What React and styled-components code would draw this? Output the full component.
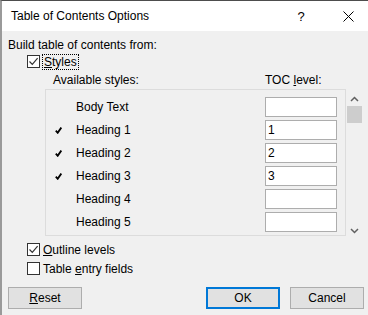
import React from "react";
import styled, { createGlobalStyle } from "styled-components";

const Global = createGlobalStyle`
html, body {
    margin: 0;
    padding: 0;
    background: #f0f0f0;
}
body {
    font-family: "Liberation Sans", Arial, sans-serif;
    font-size: 12px;
    color: #000;
}
`

const styles = [
    { name: "Body Text", level: "", used: false },
    { name: "Heading 1", level: "1", used: true },
    { name: "Heading 2", level: "2", used: true },
    { name: "Heading 3", level: "3", used: true },
    { name: "Heading 4", level: "", used: false },
    { name: "Heading 5", level: "", used: false },
]

function Tick() {
    return (
        <svg width="7" height="7" viewBox="0 0 7 7">
            <path d="M0.8 3.6 L2.7 5.8 L6.3 0.6" fill="none" stroke="#000" strokeWidth="1.8" />
        </svg>
    )
}

function Box({ checked }) {
    return (
        <CheckBox>
            {checked && (
                <svg width="11" height="11" viewBox="0 0 11 11">
                    <path d="M1.5 5.5 L4.3 8.3 L9.6 2.2" fill="none" stroke="#333" strokeWidth="1.2" />
                </svg>
            )}
        </CheckBox>
    )
}

export default function App() {
    return (
        <>
            <Global />
            <Window>
                <TitleBar>
                    <span>Table of Contents Options</span>
                    <Help>?</Help>
                    <Close>
                        <svg width="11" height="11" viewBox="0 0 11 11">
                            <path d="M0.5 0.5 L10.5 10.5 M10.5 0.5 L0.5 10.5" stroke="#000" strokeWidth="1" />
                        </svg>
                    </Close>
                </TitleBar>
                <Body>
                    <GroupLabel>Build table of contents from:</GroupLabel>
                    <CheckRow>
                        <Box checked />
                        <Focus><u>S</u>tyles</Focus>
                    </CheckRow>
                    <Headers>
                        <span>Available styles:</span>
                        <span>TOC <u>l</u>evel:</span>
                    </Headers>
                    <ListArea>
                        <ListBox>
                            {styles.map((s) => (
                                <StyleRow key={s.name}>
                                    <Mark>{s.used && <Tick />}</Mark>
                                    <StyleName>{s.name}</StyleName>
                                    <Level>{s.level}</Level>
                                </StyleRow>
                            ))}
                        </ListBox>
                        <ScrollBar>
                            <svg width="9" height="6" viewBox="0 0 9 6">
                                <path d="M1 5 L4.5 1.5 L8 5" fill="none" stroke="#606060" strokeWidth="1.5" />
                            </svg>
                            <Thumb />
                            <Spacer />
                            <svg width="9" height="6" viewBox="0 0 9 6">
                                <path d="M1 1 L4.5 4.5 L8 1" fill="none" stroke="#606060" strokeWidth="1.5" />
                            </svg>
                        </ScrollBar>
                    </ListArea>
                    <CheckRow top={6}>
                        <Box checked />
                        <Label><u>O</u>utline levels</Label>
                    </CheckRow>
                    <CheckRow top={4}>
                        <Box />
                        <Label>Table <u>e</u>ntry fields</Label>
                    </CheckRow>
                    <Buttons>
                        <Button><u>R</u>eset</Button>
                        <Right>
                            <Button primary>OK</Button>
                            <Button>Cancel</Button>
                        </Right>
                    </Buttons>
                </Body>
            </Window>
        </>
    )
}

const Window = styled.div`
width: 366px;
height: 314px;
border-top: 1px solid #4d4d4d;
border-left: 2px solid #9a9a9a;
display: flex;
flex-direction: column;
background: #f0f0f0;
`

const TitleBar = styled.div`
height: 30px;
background: #fff;
display: flex;
align-items: center;
padding-left: 9px;
`

const Help = styled.span`
margin-left: auto;
width: 12px;
text-align: center;
margin-right: 36px;
font-size: 13px;
`

const Close = styled.span`
display: flex;
margin-right: 14px;
`

const Body = styled.div`
display: flex;
flex-direction: column;
padding: 0 4px 0 6px;
`

const GroupLabel = styled.div`
margin-top: 6px;
line-height: 16px;
`

const CheckRow = styled.div`
display: flex;
align-items: center;
gap: 3px;
margin-top: ${(p) => (p.top || 1)}px;
margin-left: 19px;
height: 15px;
`

const CheckBox = styled.span`
width: 11px;
height: 11px;
border: 1px solid #333;
background: #fff;
display: flex;
`

const Focus = styled.span`
outline: 1px dotted #000;
outline-offset: 0;
line-height: 14px;
padding: 0 1px;
`

const Label = styled.span`
line-height: 14px;
`

const Headers = styled.div`
display: grid;
grid-template-columns: 212px auto;
line-height: 16px;
margin-top: 3px;
padding-left: 45px;
`

const ListArea = styled.div`
display: flex;
margin-top: 1px;
height: 147px;
`

const ListBox = styled.div`
width: 301px;
height: 147px;
margin-left: 37px;
border: 1px solid #dcdcdc;
display: flex;
flex-direction: column;
gap: 3px;
padding-top: 7px;
box-sizing: border-box;
`

const StyleRow = styled.div`
display: flex;
align-items: center;
height: 20px;
`

const Mark = styled.span`
width: 30px;
display: flex;
justify-content: flex-end;
padding-right: 14px;
box-sizing: border-box;
`

const StyleName = styled.span`
flex: 1;
`

const Level = styled.span`
width: 72px;
height: 20px;
box-sizing: border-box;
border: 1px solid #adadad;
background: #fff;
margin-right: 8px;
padding-left: 2px;
line-height: 18px;
`

const ScrollBar = styled.div`
width: 16px;
display: flex;
flex-direction: column;
align-items: center;
padding-top: 7px;
padding-bottom: 2px;
box-sizing: border-box;
`

const Thumb = styled.div`
width: 15px;
height: 17px;
background: #cdcdcd;
margin-top: 4px;
`

const Spacer = styled.div`
flex: 1;
`

const Buttons = styled.div`
display: flex;
margin-top: 11px;
`

const Right = styled.div`
display: flex;
gap: 10px;
margin-left: auto;
`

const Button = styled.button`
width: 74px;
height: 22px;
box-sizing: border-box;
background: #e1e1e1;
border: ${(p) => (p.primary ? "2px solid #0078d7" : "1px solid #adadad")};
font-family: inherit;
font-size: 12px;
color: #000;
padding: 0;
`
